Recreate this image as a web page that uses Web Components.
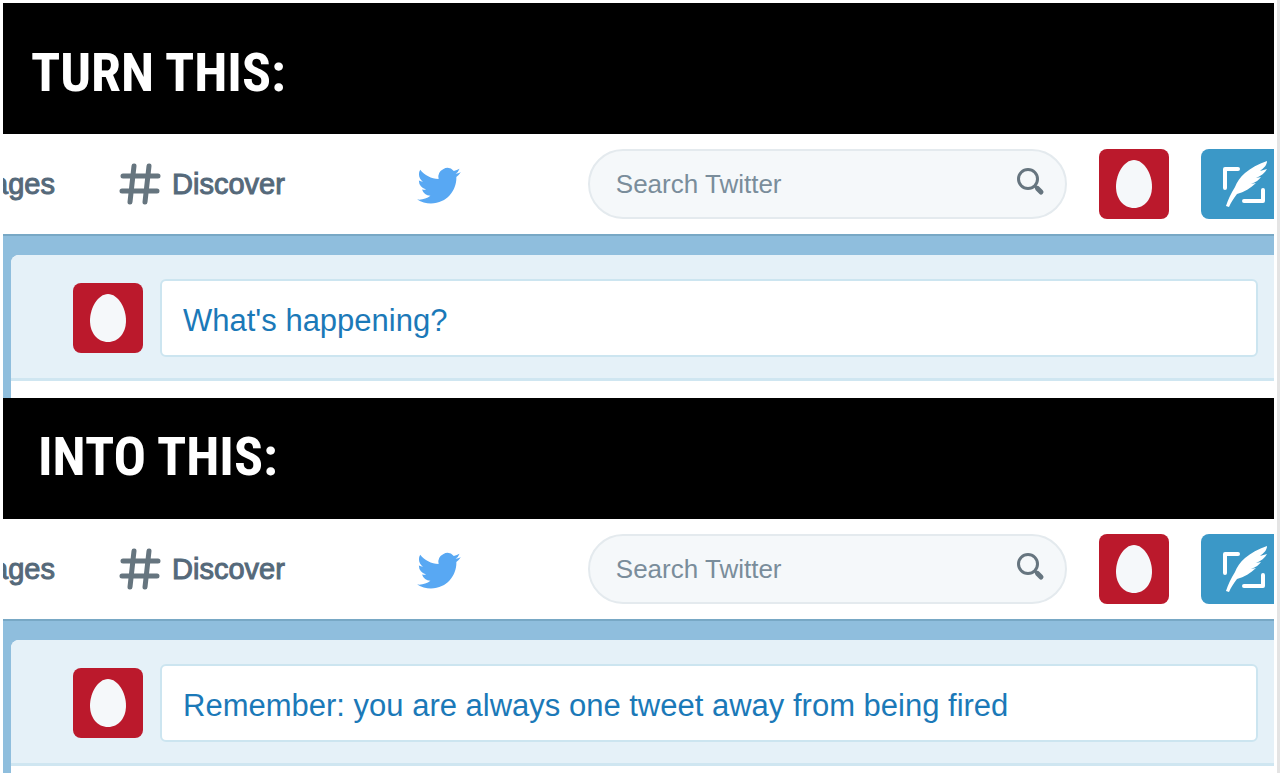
<!DOCTYPE html>
<html lang="en">
<head>
    <meta charset="UTF-8">
    <meta name="viewport" content="width=device-width, initial-scale=1.0">
    <title>Turn this into this</title>
    <style>
        body {
            margin: 0;
            background: #fff;
            font-family: "Liberation Sans", Arial, sans-serif;
        }
    </style>
</head>
<body>
    <template id="before-after">
        <style>
            :host {
                display: block;
                box-sizing: border-box;
                height: 100vh;
                overflow: hidden;
                padding: 3px 3px 0;
                border-right: 3px solid #e4e4e4;
            }
        </style>
        <slot></slot>
    </template>

    <template id="title-banner">
        <style>
            :host {
                display: block;
                background: #000;
                color: #fff;
                padding: 38px 28px 29px;
            }
            :host([compact]) {
                padding: 27px 35px 30px;
            }
            h2 {
                margin: 0;
                font: bold 54px/64px "Roboto Condensed", Roboto, sans-serif;
            }
        </style>
        <h2><slot></slot></h2>
    </template>

    <template id="egg-avatar">
        <style>
            :host {
                display: block;
                flex: none;
            }
            svg {
                display: block;
            }
        </style>
        <svg width="70" height="70" viewBox="0 0 70 70" role="img" aria-label="Profile">
            <rect width="70" height="70" rx="8" fill="#bb192c"/>
            <path d="M35 11C25 11 17 25 17 37.500C17 50 24.500 59 35 59C45.500 59 53 50 53 37.500C53 25 45 11 35 11Z" fill="#f5f8fa"/>
        </svg>
    </template>

    <template id="search-box">
        <style>
            :host {
                display: block;
                flex: 1;
                min-width: 0;
            }
            label {
                display: flex;
                align-items: center;
                box-sizing: border-box;
                height: 70px;
                padding: 0 20px 0 26px;
                border: 2px solid #e4eaee;
                border-radius: 35px;
                background: #f5f8fa;
            }
            input {
                flex: 1;
                min-width: 0;
                padding: 0;
                border: 0;
                outline: 0;
                background: none;
                color: #66757f;
                font: inherit;
                font-size: 26px;
                line-height: 32px;
            }
            input::placeholder {
                color: #7a8d9b;
                opacity: 1;
            }
            svg {
                flex: none;
            }
        </style>
        <label>
            <input type="search" placeholder="Search Twitter" aria-label="Search Twitter">
            <svg width="28" height="38" viewBox="0 0 28 38" fill="none" stroke="#66757f">
                <circle cx="11" cy="14" r="9.500" stroke-width="3"/>
                <path d="M18 21L20 23" stroke-width="3"/>
                <path d="M20.500 23.500L24 27" stroke-width="5" stroke-linecap="round"/>
            </svg>
        </label>
    </template>

    <template id="top-bar">
        <style>
            :host {
                display: flex;
                align-items: center;
                height: 100px;
                overflow: hidden;
                background: #fff;
                color: #55697a;
                font-size: 29px;
                line-height: 36px;
            }
            a {
                display: flex;
                align-items: center;
                flex: none;
                color: inherit;
                text-decoration: none;
                -webkit-text-stroke: 1px;
            }
            .messages {
                justify-content: flex-end;
                width: 52px;
                margin-right: 64px;
                overflow: hidden;
            }
            .discover {
                gap: 11px;
            }
            .home {
                margin: 0 127px 0 132px;
            }
            egg-avatar {
                margin: 0 32px;
            }
            button {
                flex: none;
                width: 90px;
                height: 70px;
                margin-right: -17px;
                padding: 0;
                border: 0;
                border-radius: 8px;
                background: #3b98c7;
            }
            svg {
                display: block;
            }
        </style>
        <a class="messages" href="#messages">ages</a>
        <a class="discover" href="#discover">
            <svg width="42" height="42" viewBox="0 0 42 42" fill="none" stroke="#66757f" stroke-width="5" stroke-linecap="round">
                <path d="M15 3L11 39M30 3L26 39M4 13H39M3 28H38"/>
            </svg>
            Discover
        </a>
        <a class="home" href="#home" aria-label="Home">
            <svg width="44" height="40" viewBox="0 0 24 22" fill="#58a8f3">
                <path d="M23.953 4.570a10 10 0 01-2.825.775 4.958 4.958 0 002.163-2.723c-.951.555-2.005.959-3.127 1.184a4.920 4.920 0 00-8.384 4.482C7.690 8.095 4.067 6.130 1.640 3.162a4.822 4.822 0 00-.666 2.475c0 1.710.870 3.213 2.188 4.096a4.904 4.904 0 01-2.228-.616v.060a4.923 4.923 0 003.946 4.827 4.996 4.996 0 01-2.212.085 4.936 4.936 0 004.604 3.417 9.867 9.867 0 01-6.102 2.105c-.390 0-.779-.023-1.170-.067a13.995 13.995 0 007.557 2.209c9.053 0 13.998-7.496 13.998-13.985 0-.210 0-.420-.015-.630A9.935 9.935 0 0024 4.590z"/>
            </svg>
        </a>
        <search-box></search-box>
        <egg-avatar></egg-avatar>
        <button type="button" aria-label="Compose new Tweet">
            <svg width="90" height="70" viewBox="0 0 90 70">
                <g fill="none" stroke="#fff" stroke-width="4" stroke-linecap="round" stroke-linejoin="round">
                    <path d="M24 39V20H37M43 52H62V41"/>
                </g>
                <path fill="#fff" d="M66 12C57 15 50 19 44 24C39 28 36 33 34 38C30 44 27 51 25 57L28 58C30 53 33 49 36 45C43 43 50 39 55 34L50 35C55 33 58 31 60 28L55 29C60 27 64 24 66 20L59 22C63 19 66 16 66 12Z"/>
            </svg>
        </button>
    </template>

    <template id="tweet-composer">
        <style>
            :host {
                display: block;
                padding: 19px 0 0 8px;
                border-top: 2px solid #78a8c5;
                background: #8fbedd;
                overflow: hidden;
            }
            .timeline {
                padding-bottom: 17px;
                border-top-left-radius: 8px;
                background: #fff;
            }
            form {
                display: flex;
                align-items: center;
                gap: 17px;
                padding: 24px 16px 21px 62px;
                border-bottom: 3px solid #cfe6f1;
                border-top-left-radius: 8px;
                background: #e5f1f8;
            }
            input {
                flex: 1;
                min-width: 0;
                box-sizing: border-box;
                height: 78px;
                padding: 6px 21px 0;
                border: 2px solid #cce5f0;
                border-radius: 6px;
                outline: 0;
                background: #fff;
                color: #1b79b8;
                font: inherit;
                font-size: 31px;
            }
        </style>
        <div class="timeline">
            <form>
                <egg-avatar></egg-avatar>
                <input type="text" aria-label="Compose new Tweet">
            </form>
        </div>
    </template>

    <before-after>
        <title-banner>TURN THIS:</title-banner>
        <top-bar></top-bar>
        <tweet-composer text="What's happening?"></tweet-composer>
        <title-banner compact>INTO THIS:</title-banner>
        <top-bar></top-bar>
        <tweet-composer text="Remember: you are always one tweet away from being fired"></tweet-composer>
    </before-after>

    <script>
        class TemplateElement extends HTMLElement {
            constructor() {
                super();
                let template = document.getElementById(this.localName);
                this._shadow = this.attachShadow({mode: 'open'});
                this._shadow.appendChild(document.importNode(template.content, true));
            }
        }

        class BeforeAfter extends TemplateElement {}
        class TitleBanner extends TemplateElement {}
        class EggAvatar extends TemplateElement {}
        class SearchBox extends TemplateElement {}
        class TopBar extends TemplateElement {}

        class TweetComposer extends TemplateElement {
            static get observedAttributes() {
                return ['text'];
            }

            attributeChangedCallback(attrName, oldVal, newVal) {
                this._shadow.querySelector('input').value = newVal || '';
            }
        }

        customElements.define('egg-avatar', EggAvatar);
        customElements.define('search-box', SearchBox);
        customElements.define('title-banner', TitleBanner);
        customElements.define('top-bar', TopBar);
        customElements.define('tweet-composer', TweetComposer);
        customElements.define('before-after', BeforeAfter);
    </script>
</body>
</html>
